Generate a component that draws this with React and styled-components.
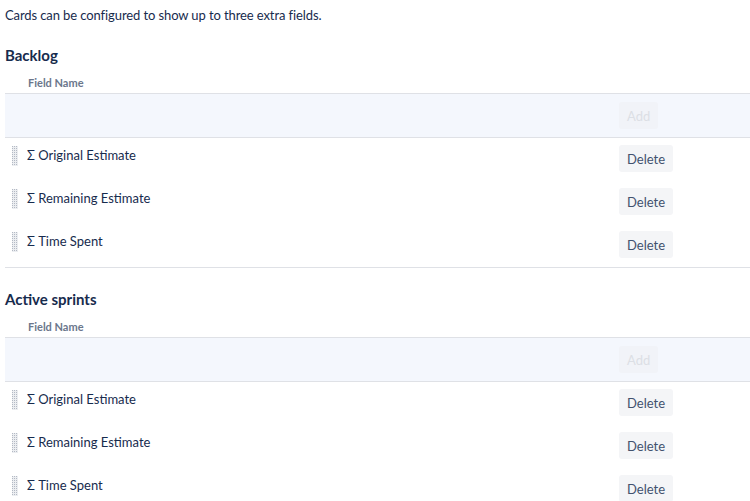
import styled, { createGlobalStyle } from "styled-components"

const GlobalStyle = createGlobalStyle`
  html, body {
    margin: 0;
    padding: 0;
    background: #ffffff;
    overflow: hidden;
  }
  body {
    font-family: Lato, "Liberation Sans", sans-serif;
    font-size: 13px;
    color: #172b4d;
  }
`

const Page = styled.div`
  padding: 5px 0 0 5px;
`
const Intro = styled.p`
  margin: 0;
  line-height: 20px;
  letter-spacing: -0.1px;
`
const Section = styled.section`
  margin-top: 18px;
  & + & {
    margin-top: 19px;
  }
`
const Heading = styled.h3`
  margin: 0;
  font-size: 15px;
  font-weight: 700;
  line-height: 24px;
`
const ColumnTitle = styled.div`
  padding: 8px 0 2px 23px;
  font-size: 11px;
  font-weight: 700;
  line-height: 16px;
  color: #6b778c;
`
const Table = styled.div`
  border-bottom: 1px solid #dfe1e6;
`
const AddRow = styled.div`
  display: flex;
  background: #f4f7fd;
  border-top: 1px solid #dfe1e6;
  border-bottom: 1px solid #dfe1e6;
`
const Row = styled.div`
  display: flex;
`
const NameCell = styled.div`
  flex: 1;
  display: flex;
  align-items: flex-start;
  gap: 8px;
  padding: 7px 0 9px 7px;
  line-height: 20px;
`
const ActionCell = styled.div`
  width: 131px;
  padding: ${props => props.$header ? "8px 0" : "7px 0 9px"};
`
const HandleSvg = styled.svg`
  flex: none;
  margin-top: 1px;
`
const Button = styled.button`
  height: 27px;
  padding: 0 8px;
  border: none;
  border-radius: 3px;
  font-family: inherit;
  font-size: 13px;
  background: ${props => props.disabled ? "#f1f3f8" : "#f4f5f7"};
  color: ${props => props.disabled ? "#dcdfe5" : "#42526e"};
  cursor: ${props => props.disabled ? "default" : "pointer"};
`

const DragHandle = () => {
  const dots = []
  for (let r = 0; r < 10; r++) {
    for (let c = 0; c < 3; c++) {
      dots.push(<rect key={r + "-" + c} x={c * 2} y={r * 2} width="1" height="1" fill="#b3b9c4" />)
    }
  }
  return (
    <HandleSvg width="7" height="20" viewBox="0 0 7 20">
      <rect x="0" y="0" width="6" height="20" fill="#eceef1" />
      {dots}
    </HandleSvg>
  )
}

const fields = ["Σ Original Estimate", "Σ Remaining Estimate", "Σ Time Spent"]

const FieldTable = ({ title }) => (
  <Section>
    <Heading>{title}</Heading>
    <ColumnTitle>Field Name</ColumnTitle>
    <Table>
      <AddRow>
        <NameCell />
        <ActionCell $header>
          <Button disabled>Add</Button>
        </ActionCell>
      </AddRow>
      {fields.map(f => (
        <Row key={f}>
          <NameCell>
            <DragHandle />
            <span>{f}</span>
          </NameCell>
          <ActionCell>
            <Button>Delete</Button>
          </ActionCell>
        </Row>
      ))}
    </Table>
  </Section>
)

const App = () => (
  <Page>
    <GlobalStyle />
    <Intro>Cards can be configured to show up to three extra fields.</Intro>
    <FieldTable title="Backlog" />
    <FieldTable title="Active sprints" />
  </Page>
)

export default App
